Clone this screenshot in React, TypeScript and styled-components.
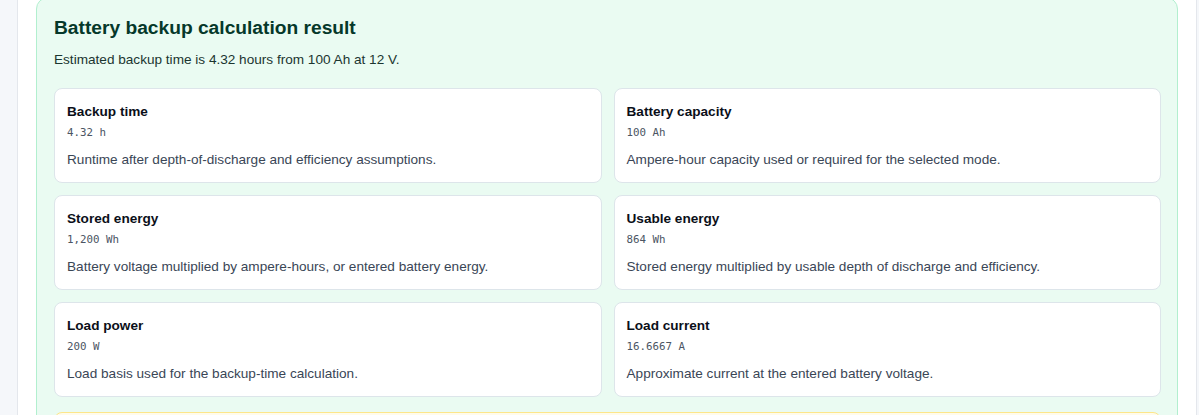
import React from 'react';
import styled, { createGlobalStyle } from 'styled-components';

type Metric = {
  label: string;
  value: string;
  note: string;
};

const metrics: Metric[] = [
  { label: 'Backup time', value: '4.32 h', note: 'Runtime after depth-of-discharge and efficiency assumptions.' },
  { label: 'Battery capacity', value: '100 Ah', note: 'Ampere-hour capacity used or required for the selected mode.' },
  { label: 'Stored energy', value: '1,200 Wh', note: 'Battery voltage multiplied by ampere-hours, or entered battery energy.' },
  { label: 'Usable energy', value: '864 Wh', note: 'Stored energy multiplied by usable depth of discharge and efficiency.' },
  { label: 'Load power', value: '200 W', note: 'Load basis used for the backup-time calculation.' },
  { label: 'Load current', value: '16.6667 A', note: 'Approximate current at the entered battery voltage.' },
];

const GlobalStyle = createGlobalStyle`
  body {
    margin: 0;
    background: #f5f7fa;
    font-family: 'Liberation Sans', Arial, sans-serif;
    overflow: hidden;
  }
`;

const Page = styled.div`
  padding-left: 17px;
`;

const Sheet = styled.main`
  width: 1180px;
  box-sizing: border-box;
  background: #fff;
  border-left: 1px solid #e4e7ec;
  border-right: 1px solid #e4e7ec;
  padding: 0 18px 40px;
`;

const ResultPanel = styled.section`
  margin-top: -3px;
  border: 1px solid #b2efcf;
  border-radius: 12px;
  background: #eafbf2;
  padding: 18px 16px 20px 17px;
`;

const Title = styled.h2`
  margin: 0 0 11px;
  font-size: 19.2px;
  line-height: 23px;
  font-weight: 700;
  color: #05382a;
`;

const Summary = styled.p`
  margin: 0 0 18px;
  font-size: 13.6px;
  line-height: 20px;
  color: #1b3530;
`;

const Grid = styled.div`
  display: grid;
  grid-template-columns: 1fr 1fr;
  gap: 12px;
`;

const Card = styled.div`
  background: #fff;
  border: 1px solid #dde5ea;
  border-radius: 8px;
  padding: 14px 12px 12px;
`;

const Label = styled.div`
  font-size: 13.6px;
  line-height: 18px;
  font-weight: 700;
  color: #0b0f19;
`;

const Value = styled.code`
  display: block;
  margin-top: 4px;
  font-family: Consolas, 'DejaVu Sans Mono', monospace;
  font-size: 10.8px;
  line-height: 16px;
  color: #4b5563;
`;

const Note = styled.p`
  margin: 9px 0 0;
  font-size: 13.6px;
  line-height: 20px;
  color: #3a4656;
`;

// assumptions block that follows the metric grid
const Caution = styled.div`
  margin-top: 15px;
  min-height: 56px;
  border: 1px solid #fde68a;
  border-radius: 8px;
  background: #fffbeb;
`;

const App = () => {
  return (
    <Page>
      <GlobalStyle />
      <Sheet>
        <ResultPanel>
          <Title>Battery backup calculation result</Title>
          <Summary>Estimated backup time is 4.32 hours from 100 Ah at 12 V.</Summary>
          <Grid>
            {metrics.map((m) => (
              <Card key={m.label}>
                <Label>{m.label}</Label>
                <Value>{m.value}</Value>
                <Note>{m.note}</Note>
              </Card>
            ))}
          </Grid>
          <Caution />
        </ResultPanel>
      </Sheet>
    </Page>
  );
};

export default App;
